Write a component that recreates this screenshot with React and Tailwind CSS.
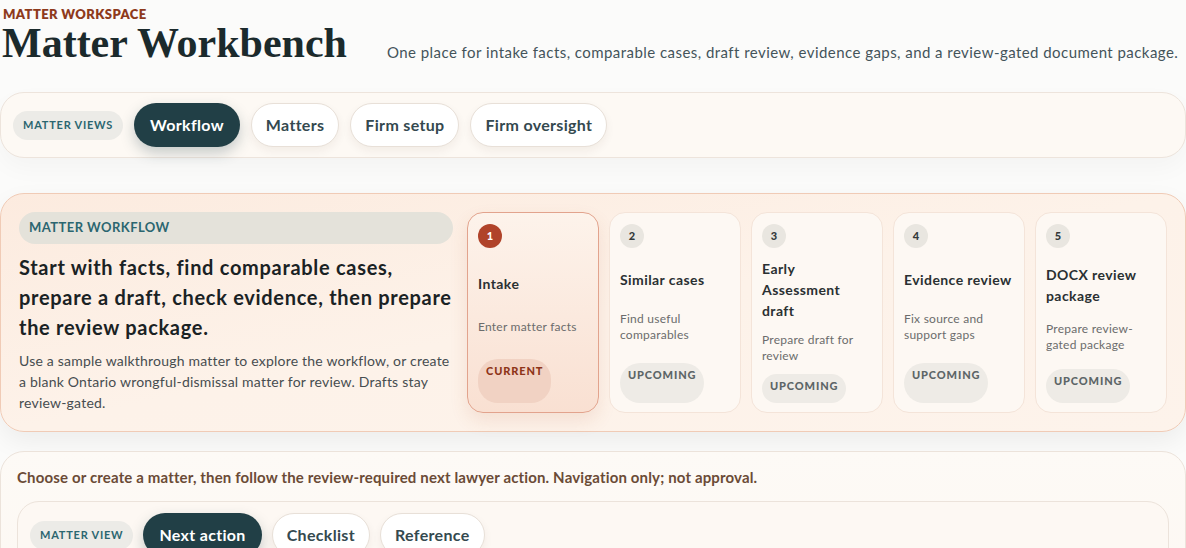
import React from "react";

const steps = [
  { n: 1, title: "Intake", desc: "Enter matter facts", status: "CURRENT" },
  { n: 2, title: "Similar cases", desc: "Find useful comparables", status: "UPCOMING" },
  { n: 3, title: "Early Assessment draft", desc: "Prepare draft for review", status: "UPCOMING" },
  { n: 4, title: "Evidence review", desc: "Fix source and support gaps", status: "UPCOMING" },
  { n: 5, title: "DOCX review package", desc: "Prepare review-gated package", status: "UPCOMING" },
];

function LabelPill({ children }) {
  return (
    <span className="flex h-[29px] items-center rounded-full bg-[#ecebe7] px-[10px] text-[11px] font-bold tracking-[0.07em] text-[#2b6670]">
      {children}
    </span>
  );
}

function NavPill({ active, children }) {
  if (active) {
    return (
      <button className="flex h-11 items-center rounded-full bg-[#213f46] px-[16px] text-[16px] font-bold tracking-[0.02em] text-white shadow-[0_6px_14px_rgba(33,63,70,0.25)]">
        {children}
      </button>
    );
  }
  return (
    <button className="flex h-11 items-center rounded-full border border-[#e8e0d8] bg-white px-[14px] text-[16px] font-bold tracking-[0.02em] text-[#34494f] shadow-[0_4px_10px_rgba(60,40,20,0.06)]">
      {children}
    </button>
  );
}

function StepCard({ step }) {
  const current = step.status === "CURRENT";
  return (
    <div
      className={
        current
          ? "grid content-stretch gap-[6px] rounded-[16px] border border-[#e2a38d] bg-gradient-to-b from-[#fdf3eb] to-[#f9e0d2] px-[10px] pt-[11px] pb-[9px] shadow-[0_8px_18px_rgba(180,90,50,0.12)]"
          : "grid content-stretch gap-[6px] rounded-[16px] border border-[#f4e4d9] bg-[#fdf8f3] px-[10px] pt-[11px] pb-[9px]"
      }
    >
      <span
        className={
          current
            ? "flex size-6 items-center justify-center justify-self-start rounded-full bg-[#b0432a] text-[11px] font-black text-white"
            : "flex size-6 items-center justify-center justify-self-start rounded-full bg-[#e9e6e0] text-[11px] font-black text-[#34393a]"
        }
      >
        {step.n}
      </span>
      <div className="self-start text-[14px] font-bold leading-[21px] tracking-[0.03em] text-[#2a3032]">{step.title}</div>
      <div className="self-start text-[12px] leading-4 tracking-[0.02em] text-[#6b6c6c]">{step.desc}</div>
      <span
        className={
          current
            ? "justify-self-start rounded-[20px] bg-[#f1d2c3] px-2 pt-[5px] pb-[6px] text-[11px] font-black leading-[14px] tracking-[0.08em] text-[#8e3419]"
            : "justify-self-start rounded-[20px] bg-[#eeebe6] px-2 pt-[5px] pb-[6px] text-[11px] font-black leading-[14px] tracking-[0.08em] text-[#5c6567]"
        }
      >
        {step.status}
      </span>
    </div>
  );
}

export default function App() {
  return (
    <div className="h-[548px] overflow-hidden bg-[#fbfbfa] font-['Lato','Inter',sans-serif] text-[#1f2a2c]">
      <header className="pt-[6px]">
        <p className="pl-[3px] text-[13px] font-extrabold uppercase leading-4 tracking-[0.03em] text-[#8e3a1c]">Matter Workspace</p>
        <div className="flex items-end gap-10">
          <h1 className="pl-[2px] font-['Liberation_Serif','Times_New_Roman',serif] text-[42px] font-bold leading-[42px] text-[#1b2a2c]">
            Matter Workbench
          </h1>
          <p className="pb-[2px] text-[15px] leading-5 tracking-[0.03em] text-[#44545a]">
            One place for intake facts, comparable cases, draft review, evidence gaps, and a review-gated document package.
          </p>
        </div>
      </header>

      <nav className="mt-[28px] flex items-center gap-[11px] rounded-[24px] border border-[#ede4dc] bg-[#fdf9f4] px-3 py-[10px] shadow-[0_10px_24px_rgba(0,0,0,0.03)]">
        <LabelPill>MATTER VIEWS</LabelPill>
        <NavPill active>Workflow</NavPill>
        <NavPill>Matters</NavPill>
        <NavPill>Firm setup</NavPill>
        <NavPill>Firm oversight</NavPill>
      </nav>

      <section className="mt-[35px] flex gap-[14px] rounded-[24px] border border-[#f0cbb6] bg-gradient-to-br from-[#fcebdf] via-[#fdf2e9] to-[#fdf3eb] p-[18px] shadow-[0_10px_26px_rgba(0,0,0,0.06)]">
        <div className="flex w-[434px] shrink-0 flex-col gap-2">
          <div className="flex h-8 items-center rounded-full bg-[#e4e2da] px-[10px] text-[13px] font-bold tracking-[0.035em] text-[#2b6670]">
            MATTER WORKFLOW
          </div>
          <h2 className="text-[20px] font-bold leading-[30px] tracking-[0.035em] text-[#1a2224]">
            Start with facts, find comparable cases, prepare a draft, check evidence, then prepare the review package.
          </h2>
          <p className="text-[14px] leading-[21px] tracking-[0.015em] text-[#474d50]">
            Use a sample walkthrough matter to explore the workflow, or create a blank Ontario wrongful-dismissal matter for review. Drafts stay review-gated.
          </p>
        </div>
        <div className="grid flex-1 grid-cols-5 gap-[10px]">
          {steps.map((s) => (
            <StepCard key={s.n} step={s} />
          ))}
        </div>
      </section>

      <section className="mt-[19px] rounded-[24px] border border-[#ece3db] bg-gradient-to-b from-[#fdfaf6] to-[#fdf8f3] px-4 pt-[15px] pb-6">
        <p className="text-[15px] font-bold leading-5 tracking-[0.01em] text-[#6b4b36]">
          Choose or create a matter, then follow the review-required next lawyer action. Navigation only; not approval.
        </p>
        <div className="mt-[14px] flex items-center gap-[10px] rounded-[22px] border border-[#ece3db] bg-[#fdf8f3] px-3 pt-[11px] pb-4">
          <LabelPill>MATTER VIEW</LabelPill>
          <NavPill active>Next action</NavPill>
          <NavPill>Checklist</NavPill>
          <NavPill>Reference</NavPill>
        </div>
      </section>
    </div>
  );
}
